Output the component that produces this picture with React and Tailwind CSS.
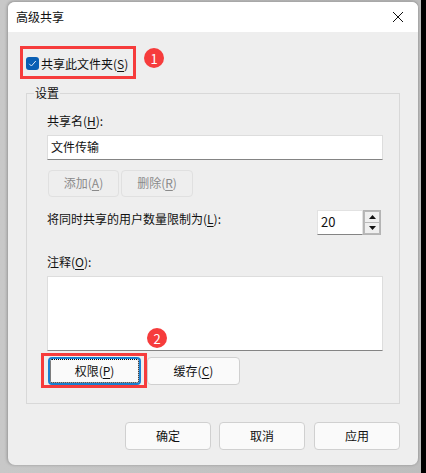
const font = { fontFamily: '"Noto Sans CJK SC", "Liberation Sans", sans-serif' };

function U({ children }) {
  return <span className="underline underline-offset-2">{children}</span>;
}

function Btn({ children, className = "" }) {
  return (
    <div className={`flex h-[28px] items-center justify-center rounded-[4px] border border-[#d0d0d0] bg-[#fafafa] pb-[1px] text-[12px] text-[#111] ${className}`}>
      {children}
    </div>
  );
}

export default function App() {
  return (
    <div className="relative flex h-[473px] w-[426px] overflow-hidden bg-[linear-gradient(90deg,#c8c8c8,#bdbdbd)] pl-[8px] pt-[1px]" style={font}>
      <div className="flex h-[464px] w-[411px] flex-col overflow-hidden rounded-[7px] border-t border-r border-[#a8a8a8] bg-[#eeeeee] shadow-[-1px_0_3px_rgba(0,0,0,0.25)]">
        <div className="flex h-[30px] shrink-0 items-center justify-between bg-white pl-[8px] pr-[14px] text-[12px] leading-none text-[#111]">
          <span>高级共享</span>
          <svg width="12" height="12" viewBox="0 0 12 12" fill="none" stroke="#111" strokeWidth="1">
            <path d="M1 1l10 10M11 1L1 11" />
          </svg>
        </div>

        <div className="flex flex-col pl-[18px] pt-[15px]">
          <div className="flex h-[33px] items-center text-[12px] text-[#111]">
            <span className="mr-[2px] flex h-[13px] w-[13px] items-center justify-center rounded-[3px] bg-[#0a5fb4]">
              <svg width="9" height="9" viewBox="0 0 9 9" fill="none" stroke="#dfeaf6" strokeWidth="1">
                <path d="M1.2 4.8l2.2 2.2 4.4-5" />
              </svg>
            </span>
            <span>共享此文件夹(<U>S</U>)</span>
          </div>

          <div className="relative mt-[13px] h-[311px] w-[374px] border border-[#d8d8d8] pl-[20px] pr-[16px]">
            <span className="absolute left-[7px] top-[-10px] bg-[#eeeeee] px-[1px] text-[12px] leading-[18px] text-[#111]">设置</span>

            <div className="pt-[18px] text-[12px] leading-[18px] text-[#111]">共享名(<U>H</U>):</div>
            <div className="mt-[5px] flex h-[25px] items-center border border-[#dddddd] border-b-[#848484] bg-white pb-[2px] pl-[3px] text-[12px] text-[#111]">
              文件传输
            </div>

            <div className="mt-[10px] flex gap-[2px] pl-[1px] text-[#8a8a8a]">
              <div className="flex h-[27px] w-[71px] items-center justify-center rounded-[4px] border border-[#e0e0e0] pb-[1px] text-[12px]">添加(<U>A</U>)</div>
              <div className="flex h-[27px] w-[72px] items-center justify-center rounded-[4px] border border-[#e0e0e0] pb-[1px] text-[12px]">删除(<U>R</U>)</div>
            </div>

            <div className="mt-[13px] flex h-[25px] items-start">
              <span className="text-[12px] leading-[18px] text-[#111]">将同时共享的用户数量限制为(<U>L</U>):</span>
              <div className="ml-auto mr-[2px] flex">
                <div className="flex h-[25px] w-[46px] items-center border border-[#e2e2e2] border-b-[#848484] bg-white pb-[1px] pl-[3px] text-[13px] text-[#111]">20</div>
                <div className="flex h-[25px] w-[18px] flex-col border border-[#b4b4b4] bg-[#b9b9b9] p-[1px]">
                  <div className="flex h-[11px] items-center justify-center bg-[#efefef]">
                    <svg width="7" height="4" viewBox="0 0 7 4"><path d="M3.5 0L7 4H0z" fill="#111" /></svg>
                  </div>
                  <div className="mt-[1px] flex h-[10px] items-center justify-center bg-[#efefef]">
                    <svg width="7" height="4" viewBox="0 0 7 4"><path d="M0 0h7L3.5 4z" fill="#111" /></svg>
                  </div>
                </div>
              </div>
            </div>

            <div className="mt-[18px] text-[12px] leading-[18px] text-[#111]">注释(<U>O</U>):</div>
            <div className="mt-[5px] h-[75px] border border-[#dddddd] border-b-[#848484] bg-white"></div>

            <div className="mt-[6px] flex gap-[6px] pl-[1px]">
              <div className="flex h-[28px] w-[93px] items-center justify-center rounded-[4px] border-2 border-[#1a7fd0] bg-[#fafafa] pb-[1px] text-[12px] text-[#111] outline-dotted outline-1 -outline-offset-3 outline-black">
                权限(<U>P</U>)
              </div>
              <Btn className="w-[93px]">缓存(<U>C</U>)</Btn>
            </div>
          </div>

          <div className="mt-[18px] flex gap-[8px] pl-[99px]">
            <Btn className="w-[86px]">确定</Btn>
            <Btn className="w-[86px]">取消</Btn>
            <Btn className="ml-[1px] w-[86px]">应用</Btn>
          </div>
        </div>
      </div>

      <div className="absolute right-0 top-0 h-full w-[5px] bg-black"></div>

      <div className="absolute left-[20px] top-[46px] h-[33px] w-[116px] border-[3px] border-[#f63c3c]"></div>
      <div className="absolute left-[41px] top-[353px] h-[35px] w-[106px] border-[3px] border-[#f63c3c]"></div>
      <div className="absolute left-[144px] top-[48px] flex h-[20px] w-[20px] items-center justify-center rounded-full bg-[#f63c3c] text-[13px] leading-none text-white">1</div>
      <div className="absolute left-[147px] top-[328px] flex h-[20px] w-[20px] items-center justify-center rounded-full bg-[#f63c3c] text-[13px] leading-none text-white">2</div>
    </div>
  );
}
